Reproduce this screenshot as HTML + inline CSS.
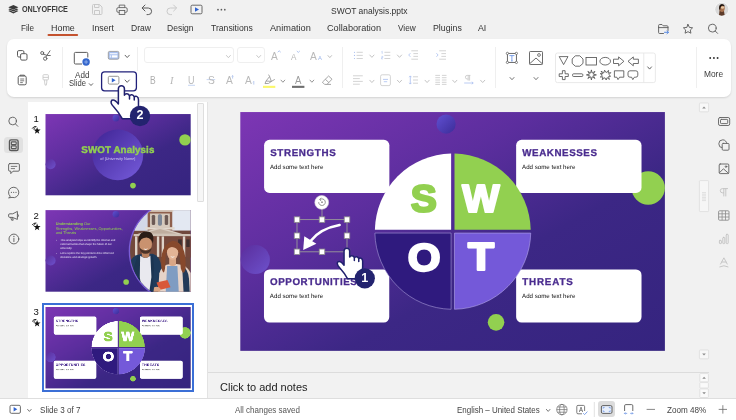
<!DOCTYPE html>
<html lang="en"><head><meta charset="utf-8"><title>SWOT analysis.pptx</title>
<style>

html,body{margin:0;padding:0}
body{width:736px;height:420px;overflow:hidden;position:relative;background:#f1f1f1;font-family:"Liberation Sans",sans-serif;}
#root{position:absolute;left:0;top:0;width:736px;height:420px;will-change:transform}
.t{position:absolute;white-space:nowrap;line-height:1;font-family:"Liberation Sans",sans-serif;}
.sl{position:absolute;display:block}
.ab{position:absolute}
svg{overflow:visible}
.sl{overflow:hidden}
.bt{font:bold 9.8px "Liberation Sans",sans-serif;text-rendering:geometricPrecision;fill:#4a2c8f;stroke:#4a2c8f;stroke-width:0.3px}
.bs{font:6.15px "Liberation Sans",sans-serif;text-rendering:geometricPrecision;fill:#111}
.big{font:bold 38px "Liberation Sans",sans-serif;text-anchor:middle;stroke-width:2.2px;stroke-linejoin:round}
#tb{position:absolute;left:7px;top:38.5px;width:724px;height:58px;background:#fff;border-radius:7px;box-shadow:0 1px 2px rgba(0,0,0,0.13)}
#thumbs{position:absolute;left:27.5px;top:102px;width:180px;height:296px;background:#fff;border-right:1px solid #e3e3e3;box-sizing:border-box}
#tsb{position:absolute;left:197.3px;top:103.2px;width:6.4px;height:99.3px;background:#f6f6f6;border:1px solid #dedede;box-sizing:border-box;border-radius:1px}
#sel{position:absolute;left:41.9px;top:302.9px;width:152.3px;height:88.7px;border:2.2px solid #3b6fd6;box-sizing:border-box;background:#fff}
.sep{position:absolute;width:1px;background:#efefef;top:47px;height:41px}
.combo{position:absolute;border:1px solid #efefef;border-radius:3px;box-sizing:border-box;background:transparent}

</style></head>
<body>
<div id="root">
<svg width="0" height="0" style="position:absolute">
<defs>
<linearGradient id="gBg" x1="0" y1="0" x2="1" y2="1">
<stop offset="0" stop-color="#7d36b4"/><stop offset="0.35" stop-color="#5c2e9e"/><stop offset="0.62" stop-color="#3c2785"/><stop offset="1" stop-color="#35247f"/>
</linearGradient>
<linearGradient id="gTop" x1="0" y1="0" x2="1" y2="1">
<stop offset="0" stop-color="#6050d2"/><stop offset="1" stop-color="#3c2c98"/>
</linearGradient>
<linearGradient id="gLeft" x1="0" y1="0" x2="1" y2="1">
<stop offset="0" stop-color="#5a2d9c"/><stop offset="1" stop-color="#6d52cc"/>
</linearGradient>
<linearGradient id="gBig" x1="0" y1="0" x2="1" y2="1">
<stop offset="0.1" stop-color="#44289a"/><stop offset="0.95" stop-color="#7359d8"/>
</linearGradient>
</defs></svg>
<svg class="ab" style="left:0;top:0" width="736" height="100" viewBox="0 0 736 100" fill="none">
<g fill="#3a3a3a">
<path d="M13.35 4.9 L18.4 7.3 L13.35 9.7 L8.3 7.3 Z"/>
<path d="M8.3 9.2 L9.9 8.45 L13.35 10.1 L16.8 8.45 L18.4 9.2 L13.35 11.6 Z"/>
<path d="M8.3 11.1 L9.9 10.35 L13.35 12 L16.8 10.35 L18.4 11.1 L13.35 13.5 Z"/>
</g>
<g stroke="#c9c9c9" stroke-width="1"><path d="M92.5 5.5 a1 1 0 0 1 1 -1 h6 l2.5 2.5 v6.5 a1 1 0 0 1 -1 1 h-7.5 a1 1 0 0 1 -1 -1 z"/><path d="M94.5 4.5 v3 h4.5 v-3"/><path d="M94.5 14.5 v-4 h5 v4"/></g>
<g stroke="#5a5a5a" stroke-width="0.85"><path d="M119.2 7.6 v-2.5 h5.6 v2.5"/><rect x="116.8" y="7.6" width="10.4" height="4.8" rx="1.5"/><rect x="119.2" y="10.4" width="5.6" height="4" fill="#f1f1f1"/></g>
<g stroke="#5a5a5a" stroke-width="1" stroke-linecap="round" stroke-linejoin="round"><path d="M145 5 L142 8 L145 11"/><path d="M142.3 8 H148.3 a3.3 3.3 0 0 1 0 6.6 H147"/></g>
<g stroke="#c9c9c9" stroke-width="1" stroke-linecap="round" stroke-linejoin="round"><path d="M173.6 5 L176.6 8 L173.6 11"/><path d="M176.3 8 H170.3 a3.3 3.3 0 0 0 0 6.6 H171.6"/></g>
<rect x="191" y="5.2" width="11" height="8.6" rx="1.2" stroke="#5a5a5a" stroke-width="0.9"/><path d="M195 7.2 L199 9.5 L195 11.8 Z" fill="#2f62cf"/>
<g fill="#5a5a5a"><circle cx="218" cy="9.7" r="0.85"/><circle cx="221.4" cy="9.7" r="0.85"/><circle cx="224.8" cy="9.7" r="0.85"/></g>
<clipPath id="av"><circle cx="721.8" cy="9.3" r="6.6"/></clipPath>
<circle cx="721.8" cy="9.3" r="7.2" fill="#f8f8f8"/>
<g clip-path="url(#av)"><rect x="714" y="2" width="16" height="16" fill="#d9d9d9"/>
<path d="M719.6 10 L719 15 Q721.5 16.4 724.6 15 L724 11 Z" fill="#5e3b29"/>
<ellipse cx="722" cy="8.3" rx="2.7" ry="3.6" fill="#a87350"/>
<ellipse cx="722.5" cy="7.5" rx="1.5" ry="1.3" fill="#eccba6"/>
<path d="M719.2 9.6 Q718.4 4.2 722 4.1 Q724.6 4.2 724.8 6.4 Q723 5.2 721.4 6 Q720.2 7 720.2 9.8 Z" fill="#20150f"/>
</g>
<rect x="47.5" y="34" width="30.6" height="2" rx="1" fill="#c4522e"/>
<g stroke="#5a5a5a" stroke-width="0.9" stroke-linejoin="round" stroke-linecap="round">
<path d="M663.5 33.5 H659.6 a1 1 0 0 1 -1 -1 V25.5 a1 1 0 0 1 1 -1 H662 l1.2 1.3 H667 a1 1 0 0 1 1 1 V30.5"/>
<path d="M658.6 27.6 H668"/>
<path d="M688 24.4 L689.4 27.4 L692.6 27.8 L690.3 30 L690.9 33.2 L688 31.7 L685.1 33.2 L685.7 30 L683.4 27.8 L686.6 27.4 Z"/>
<circle cx="712.3" cy="28.1" r="3.9"/><path d="M715.2 31 L717.6 33.4"/>
</g>
<path d="M664.5 32.3 H668.3 M667 30.9 L668.5 32.3 L667 33.7" stroke="#4a7fe0" stroke-width="0.9" stroke-linecap="round" stroke-linejoin="round"/>
</svg>
<span class="t" style="left:21.60px;top:5.02px;font-size:8.9px;transform:scaleX(0.8145);transform-origin:0 0;color:#3a3a3a;font-weight:bold;">ONLYOFFICE</span>
<span class="t" style="left:330.50px;top:5.54px;font-size:9.4px;transform:scaleX(0.9035);transform-origin:0 0;color:#333;">SWOT analysis.pptx</span>
<span class="t" style="left:20.80px;top:22.86px;font-size:9.5px;transform:scaleX(0.8558);transform-origin:0 0;color:#333;">File</span>
<span class="t" style="left:51.20px;top:22.86px;font-size:9.5px;transform:scaleX(0.9392);transform-origin:0 0;color:#333;">Home</span>
<span class="t" style="left:91.50px;top:22.86px;font-size:9.5px;transform:scaleX(0.9217);transform-origin:0 0;color:#333;">Insert</span>
<span class="t" style="left:131.20px;top:22.86px;font-size:9.5px;transform:scaleX(0.9022);transform-origin:0 0;color:#333;">Draw</span>
<span class="t" style="left:167.40px;top:22.86px;font-size:9.5px;transform:scaleX(0.8995);transform-origin:0 0;color:#333;">Design</span>
<span class="t" style="left:211.40px;top:22.86px;font-size:9.5px;transform:scaleX(0.9066);transform-origin:0 0;color:#333;">Transitions</span>
<span class="t" style="left:270.20px;top:22.86px;font-size:9.5px;transform:scaleX(0.9658);transform-origin:0 0;color:#333;">Animation</span>
<span class="t" style="left:327.40px;top:22.86px;font-size:9.5px;transform:scaleX(0.9646);transform-origin:0 0;color:#333;">Collaboration</span>
<span class="t" style="left:398.20px;top:22.86px;font-size:9.5px;transform:scaleX(0.8717);transform-origin:0 0;color:#333;">View</span>
<span class="t" style="left:433.20px;top:22.86px;font-size:9.5px;transform:scaleX(0.9243);transform-origin:0 0;color:#333;">Plugins</span>
<span class="t" style="left:478.30px;top:22.86px;font-size:9.5px;transform:scaleX(0.9247);transform-origin:0 0;color:#333;">AI</span>
<div id="tb"></div>
<svg class="ab" style="left:0;top:0" width="736" height="100" viewBox="0 0 736 100" fill="none">
<g stroke="#5a5a5a" stroke-width="1"><rect x="17.5" y="50.6" width="6.4" height="6.4" rx="1.3"/><rect x="20.6" y="53.7" width="6.4" height="6.4" rx="1.3" fill="#fff"/></g>
<g stroke="#5a5a5a" stroke-width="0.9" stroke-linecap="round"><circle cx="45.2" cy="58.6" r="1.7"/><circle cx="42.2" cy="53" r="1.5"/><path d="M45.9 57 L50 50.8"/><path d="M43.2 54.2 L47.5 55.5 H50.3"/></g>
<g stroke="#5a5a5a" stroke-width="1"><rect x="18.2" y="76" width="8" height="8.8" rx="1.4"/><path d="M20 76 v-0.8 h4.4 v0.8" /><path d="M20.2 79 h4 M20.2 80.8 h4 M20.2 82.6 h2.6" stroke-width="0.8"/></g>
<g stroke="#c9c9c9" stroke-width="0.9"><rect x="43" y="74.7" width="5.4" height="5.2" rx="0.8"/><path d="M43 77.4 h5.4"/><path d="M44.6 79.9 v2.2 l0.5 3 h1.2 l0.5 -3 v-2.2"/></g>
<path d="M82 64 H75.5 a1.2 1.2 0 0 1 -1.2 -1.2 V53.6 a1.2 1.2 0 0 1 1.2 -1.2 H86.6 a1.2 1.2 0 0 1 1.2 1.2 V57.5" stroke="#5a5a5a" stroke-width="1"/><circle cx="86.1" cy="62" r="3.7" fill="#3567cd"/><path d="M84.2 62 h3.8 M86.1 60.1 v3.8" stroke="#9db9ee" stroke-width="0.8"/>
<path d="M89.3 83.69999999999999 L91 85.5 L92.7 83.69999999999999" fill="none" stroke="#555" stroke-width="0.9" stroke-linecap="round" stroke-linejoin="round"/>
<rect x="108.3" y="51.4" width="10.6" height="7.8" rx="1.3" fill="#a9c1ef" stroke="#9a9a9a" stroke-width="0.9"/><rect x="109.8" y="53" width="7.6" height="1.3" fill="#eaf0fc"/><rect x="109.8" y="55.3" width="1.3" height="2.2" fill="#eaf0fc"/><rect x="111.9" y="55.3" width="5.5" height="2.2" fill="#fff"/>
<path d="M125.10000000000001 55.25 L127.2 57.55 L129.3 55.25" fill="none" stroke="#555" stroke-width="0.9" stroke-linecap="round" stroke-linejoin="round"/>
<rect x="101.6" y="71.8" width="34.8" height="19" rx="3" fill="#fff" stroke="#20207a" stroke-width="1.3"/>
<rect x="108.3" y="76.3" width="10.6" height="7.8" rx="1.3" stroke="#8a8a8a" stroke-width="0.9"/><path d="M111.8 78 L115.6 80.2 L111.8 82.4 Z" fill="#2f62cf"/>
<path d="M125.10000000000001 80.05 L127.2 82.35000000000001 L129.3 80.05" fill="none" stroke="#555" stroke-width="0.9" stroke-linecap="round" stroke-linejoin="round"/>
<path d="M226.45000000000002 55.5 L228.4 57.7 L230.35 55.5" fill="none" stroke="#c2c2c2" stroke-width="0.9" stroke-linecap="round" stroke-linejoin="round"/>
<path d="M256.75 55.5 L258.7 57.7 L260.65 55.5" fill="none" stroke="#c2c2c2" stroke-width="0.9" stroke-linecap="round" stroke-linejoin="round"/>
<path d="M277.7 52.2 L279.2 50.8 L280.7 52.2" stroke="#9db6ea" stroke-width="0.8"/>
<path d="M296.8 51 L298.3 52.4 L299.8 51" stroke="#9db6ea" stroke-width="0.8"/>
<path d="M328.0 55.6 L329.8 57.6 L331.6 55.6" fill="none" stroke="#b5b5b5" stroke-width="0.9" stroke-linecap="round" stroke-linejoin="round"/>
<path d="M188 85.3 h7" stroke="#b9cbf0" stroke-width="0.8"/>
<path d="M206.6 79.6 h8.6" stroke="#b9cbf0" stroke-width="0.8"/>
<path d="M232.6 75.6 v3 M231.8 76.4 L232.6 75.6 L233.4 76.4" stroke="#9db6ea" stroke-width="0.7"/>
<path d="M253.8 81.4 v3.2 M253 82.2 L253.8 81.4" stroke="#9db6ea" stroke-width="0.7"/>
<g stroke="#8f8f8f" stroke-width="0.8" stroke-linejoin="round"><path d="M268.6 74.6 L269.6 76.6 L266 81 L265 83.6 L268.6 83.4 L271.4 81.4 L274.8 79.4"/><path d="M266 81 L271.4 81.4 L269.6 76.6"/></g>
<rect x="263" y="85.8" width="12.3" height="2.1" fill="#fbf86a"/>
<path d="M281.0 80.15 L282.9 82.25 L284.79999999999995 80.15" fill="none" stroke="#8a8a8a" stroke-width="0.9" stroke-linecap="round" stroke-linejoin="round"/>
<rect x="292" y="85.8" width="12.4" height="2.1" fill="#6f6f6f"/>
<path d="M310.0 80.15 L311.9 82.25 L313.79999999999995 80.15" fill="none" stroke="#8a8a8a" stroke-width="0.9" stroke-linecap="round" stroke-linejoin="round"/>
<g stroke="#8f8f8f" stroke-width="0.8" stroke-linejoin="round"><path d="M328.6 76 L332 79.2 L327 84.4 H324.6 L322.4 82.2 Z"/><path d="M325.4 79.3 L328.8 82.5"/><path d="M327 84.4 H331"/></g>
<circle cx="354.5" cy="52.3" r="0.6" fill="#a9bff0"/><path d="M356.6 52.3 H362.8" stroke="#cfcfcf" stroke-width="0.9"/>
<circle cx="354.5" cy="55.4" r="0.6" fill="#a9bff0"/><path d="M356.6 55.4 H362.8" stroke="#cfcfcf" stroke-width="0.9"/>
<circle cx="354.5" cy="58.5" r="0.6" fill="#a9bff0"/><path d="M356.6 58.5 H362.8" stroke="#cfcfcf" stroke-width="0.9"/>
<path d="M369.79999999999995 55.050000000000004 L371.9 57.35 L374.0 55.050000000000004" fill="none" stroke="#bdbdbd" stroke-width="0.9" stroke-linecap="round" stroke-linejoin="round"/>
<path d="M384.4 52.3 H390.3" stroke="#cfcfcf" stroke-width="0.9"/>
<path d="M384.4 55.4 H390.3" stroke="#cfcfcf" stroke-width="0.9"/>
<path d="M384.4 58.5 H390.3" stroke="#cfcfcf" stroke-width="0.9"/>
<path d="M381.6 51.6 l0.6 -0.4 v2.6 M381.5 56.4 h1.3 v1.2 h-1.3 v1.3 h1.4" stroke="#a9bff0" stroke-width="0.6"/>
<path d="M397.4 55.050000000000004 L399.5 57.35 L401.6 55.050000000000004" fill="none" stroke="#bdbdbd" stroke-width="0.9" stroke-linecap="round" stroke-linejoin="round"/>
<path d="M411.3 50.8 H418 M413.4 53.6 H418 M413.4 56.4 H418 M411.3 59.2 H418" stroke="#cfcfcf" stroke-width="0.9"/><path d="M410.4 53.2 L408.7 55 L410.4 56.8" stroke="#a9bff0" stroke-width="0.8"/>
<path d="M439.2 50.8 H446 M441.4 53.6 H446 M441.4 56.4 H446 M439.2 59.2 H446" stroke="#cfcfcf" stroke-width="0.9"/><path d="M436.4 53.2 L438.1 55 L436.4 56.8" stroke="#a9bff0" stroke-width="0.8"/>
<path d="M353 75.8 H362.8 M353 78.6 H359.8 M353 81.4 H362.8 M353 84.2 H359.8" stroke="#cfcfcf" stroke-width="0.9"/>
<path d="M369.79999999999995 80.25 L371.9 82.55000000000001 L374.0 80.25" fill="none" stroke="#bdbdbd" stroke-width="0.9" stroke-linecap="round" stroke-linejoin="round"/>
<rect x="380.6" y="74.8" width="9.8" height="10.8" rx="1.5" stroke="#cfcfcf" stroke-width="0.9"/><path d="M383 79.4 H388 M383.8 81.7 H387.2" stroke="#a9bff0" stroke-width="0.8"/>
<path d="M397.4 80.25 L399.5 82.55000000000001 L401.6 80.25" fill="none" stroke="#bdbdbd" stroke-width="0.9" stroke-linecap="round" stroke-linejoin="round"/>
<path d="M413 76.8 H418 M413 80 H418 M413 83.2 H418" stroke="#cfcfcf" stroke-width="0.9"/><path d="M410.3 76 V84 M409.2 77.2 L410.3 75.9 L411.4 77.2 M409.2 82.8 L410.3 84.1 L411.4 82.8" stroke="#a9bff0" stroke-width="0.8"/>
<path d="M425.0 80.25 L427.1 82.55000000000001 L429.20000000000005 80.25" fill="none" stroke="#bdbdbd" stroke-width="0.9" stroke-linecap="round" stroke-linejoin="round"/>
<path d="M435.3 75.4 H440 M435.3 77.7 H440 M435.3 80 H440 M435.3 82.3 H440 M435.3 84.4 H440 M441.9 75.4 H446.5 M441.9 77.7 H446.5 M441.9 80 H446.5 M441.9 82.3 H446.5 M441.9 84.4 H446.5" stroke="#cfcfcf" stroke-width="0.9"/>
<path d="M452.7 80.25 L454.8 82.55000000000001 L456.90000000000003 80.25" fill="none" stroke="#bdbdbd" stroke-width="0.9" stroke-linecap="round" stroke-linejoin="round"/>
<path d="M470.4 75.4 H467.2 a1.8 1.8 0 0 0 0 3.6 H468.2 M468.2 75.4 V80.6 M469.6 75.4 V80.6" stroke="#c4c4c4" stroke-width="0.8"/><path d="M464.2 83 H473.2 M471.8 81.8 L473.2 83 L471.8 84.2" stroke="#a9bff0" stroke-width="0.8"/>
<path d="M480.59999999999997 80.25 L482.7 82.55000000000001 L484.8 80.25" fill="none" stroke="#bdbdbd" stroke-width="0.9" stroke-linecap="round" stroke-linejoin="round"/>
<rect x="507.4" y="53.4" width="9" height="9" stroke="#5a5a5a" stroke-width="0.9"/>
<circle cx="507.4" cy="53.4" r="1.15" fill="#fff" stroke="#5a5a5a" stroke-width="0.7"/>
<circle cx="516.4" cy="53.4" r="1.15" fill="#fff" stroke="#5a5a5a" stroke-width="0.7"/>
<circle cx="507.4" cy="62.4" r="1.15" fill="#fff" stroke="#5a5a5a" stroke-width="0.7"/>
<circle cx="516.4" cy="62.4" r="1.15" fill="#fff" stroke="#5a5a5a" stroke-width="0.7"/>
<path d="M509.4 55.6 H514.4 M511.9 55.6 V61 M511.2 61 h1.4" stroke="#6f97e6" stroke-width="0.9"/>
<path d="M510.0 77.5 L512 79.69999999999999 L514.0 77.5" fill="none" stroke="#666" stroke-width="0.9" stroke-linecap="round" stroke-linejoin="round"/>
<rect x="529.5" y="51.5" width="13" height="13" rx="0.8" stroke="#5a5a5a" stroke-width="0.9"/><circle cx="539" cy="55" r="1.4" stroke="#5a5a5a" stroke-width="0.8"/><path d="M529.8 63.6 L536 58 L542.3 63.8" stroke="#5a5a5a" stroke-width="0.9"/>
<path d="M534.0 77.5 L536 79.69999999999999 L538.0 77.5" fill="none" stroke="#666" stroke-width="0.9" stroke-linecap="round" stroke-linejoin="round"/>
<rect x="555.5" y="53" width="99.9" height="29.6" rx="2" stroke="#e6e6e6" stroke-width="0.9" fill="#fff"/><path d="M643.8 53 V82.6" stroke="#e6e6e6" stroke-width="0.9"/>
<path d="M559.2 56.6 H568 L563.6 64.6 Z" stroke="#4a4a4a" stroke-width="0.8" stroke-linejoin="miter" fill="none"/>
<path d="M575.3 55.8 H579.8 L583 59 V63.4 L579.8 66.2 H575.3 L572.2 63.4 V59 Z" stroke="#4a4a4a" stroke-width="0.8" stroke-linejoin="miter" fill="none"/>
<rect x="586" y="57.4" width="10.4" height="7.6" stroke="#4a4a4a" stroke-width="0.8" stroke-linejoin="miter" fill="none"/>
<ellipse cx="605.2" cy="61.2" rx="5.3" ry="3.8" stroke="#4a4a4a" stroke-width="0.8" stroke-linejoin="miter" fill="none"/>
<path d="M613.5 59.2 H618.6 V56.9 L623.9 61.3 L618.6 65.8 V63.5 H613.5 Z" stroke="#4a4a4a" stroke-width="0.8" stroke-linejoin="miter" fill="none"/>
<path d="M638.4 59.2 H633.3 V56.9 L628 61.3 L633.3 65.8 V63.5 H638.4 Z" stroke="#4a4a4a" stroke-width="0.8" stroke-linejoin="miter" fill="none"/>
<path d="M562.4 70.7 H565.1 V73.8 H568.3 V76.5 H565.1 V79.6 H562.4 V76.5 H559.2 V73.8 H562.4 Z" stroke="#4a4a4a" stroke-width="0.8" stroke-linejoin="miter" fill="none"/>
<rect x="572.6" y="73.8" width="10.2" height="2.7" rx="0.9" stroke="#4a4a4a" stroke-width="0.8" stroke-linejoin="miter" fill="none"/>
<path d="M591.40 69.90 L592.17 73.05 L594.94 71.36 L593.25 74.13 L596.40 74.90 L593.25 75.67 L594.94 78.44 L592.17 76.75 L591.40 79.90 L590.63 76.75 L587.86 78.44 L589.55 75.67 L586.40 74.90 L589.55 74.13 L587.86 71.36 L590.63 73.05 Z" stroke="#4a4a4a" stroke-width="0.8" stroke-linejoin="miter" fill="none"/>
<path d="M601 71.2 L603.8 72.9 L604.6 70.2 L606.1 72.6 L608.6 70.4 L608.1 73.2 L610.8 72.6 L608.9 74.7 L610.6 76.2 L608.5 76.6 L609.4 79.4 L607 77.6 L606.2 80 L604.9 77.7 L602.2 79.6 L603 76.9 L600.3 77 L602.3 75.2 L600.2 73.6 L602.8 73.6 Z" stroke="#4a4a4a" stroke-width="0.8" stroke-linejoin="miter" fill="none"/>
<path d="M614.4 70.8 H623.8 V77.2 H619.6 L618 79.6 L616.8 77.2 H614.4 Z" stroke="#4a4a4a" stroke-width="0.8" stroke-linejoin="miter" fill="none"/>
<path d="M630 70.8 H635.8 Q637.8 70.8 637.8 72.8 V75.2 Q637.8 77.2 635.8 77.2 H634.4 L632.8 79.6 L631.6 77.2 H630 Q628 77.2 628 75.2 V72.8 Q628 70.8 630 70.8 Z" stroke="#4a4a4a" stroke-width="0.8" stroke-linejoin="miter" fill="none"/>
<path d="M647.7 66.9 L649.6 69.1 L651.5 66.9" fill="none" stroke="#555" stroke-width="0.9" stroke-linecap="round" stroke-linejoin="round"/>
<g fill="#333"><circle cx="710.2" cy="58" r="0.95"/><circle cx="713.9" cy="58" r="0.95"/><circle cx="717.6" cy="58" r="0.95"/></g>
</svg>
<div class="sep" style="left:61.5px"></div>
<div class="sep" style="left:342.3px"></div>
<div class="sep" style="left:495.2px"></div>
<div class="sep" style="left:696.3px"></div>
<div class="sep" style="left:137.2px;height:24px"></div>
<div class="combo" style="left:143.8px;top:47.2px;width:90.2px;height:16.2px"></div>
<div class="combo" style="left:237.2px;top:47.2px;width:27.4px;height:16.2px"></div>
<span class="t" style="left:74.90px;top:71.20px;font-size:8.5px;transform:scaleX(0.9521);transform-origin:0 0;color:#3c3c3c;">Add</span>
<span class="t" style="left:69.30px;top:79.20px;font-size:8.5px;transform:scaleX(0.8941);transform-origin:0 0;color:#3c3c3c;">Slide</span>
<span class="t" style="left:704.30px;top:69.99px;font-size:8.4px;transform:scaleX(0.9991);transform-origin:0 0;color:#3c3c3c;">More</span>
<span class="t" style="left:149.90px;top:75.90px;font-size:10.4px;transform:scaleX(0.8225);transform-origin:0 0;color:#adadad;">B</span>
<span class="t" style="left:170.00px;top:75.90px;font-size:10.4px;letter-spacing:1.713px;color:#b9b9b9;font-family:'Liberation Serif',serif;font-style:italic;">I</span>
<span class="t" style="left:188.20px;top:75.90px;font-size:10.4px;transform:scaleX(0.8662);transform-origin:0 0;color:#b9b9b9;">U</span>
<span class="t" style="left:207.60px;top:75.90px;font-size:10.4px;transform:scaleX(0.9812);transform-origin:0 0;color:#b9b9b9;">S</span>
<span class="t" style="left:226.20px;top:75.90px;font-size:10.4px;transform:scaleX(0.9812);transform-origin:0 0;color:#b9b9b9;">A</span>
<span class="t" style="left:245.40px;top:75.90px;font-size:10.4px;transform:scaleX(0.9812);transform-origin:0 0;color:#b9b9b9;">A</span>
<span class="t" style="left:271.40px;top:50.93px;font-size:10.6px;transform:scaleX(0.9624);transform-origin:0 0;color:#b9b9b9;">A</span>
<span class="t" style="left:291.40px;top:52.52px;font-size:8.6px;transform:scaleX(0.9421);transform-origin:0 0;color:#b9b9b9;">A</span>
<span class="t" style="left:310.20px;top:50.93px;font-size:10.6px;transform:scaleX(0.9624);transform-origin:0 0;color:#b9b9b9;">A</span>
<span class="t" style="left:317.60px;top:54.75px;font-size:6.2px;transform:scaleX(0.9450);transform-origin:0 0;color:#9db6ea;">A</span>
<span class="t" style="left:295.20px;top:76.07px;font-size:10.2px;transform:scaleX(0.9419);transform-origin:0 0;color:#9c9c9c;">A</span>
<div class="ab" style="left:4.4px;top:136.8px;width:18.6px;height:16.2px;border-radius:3.5px;background:#e1e1e1"></div>
<svg class="ab" style="left:0;top:100px" width="30" height="160" viewBox="0 100 30 160" fill="none">
<circle cx="12.6" cy="121" r="3.8" stroke="#5a5a5a" stroke-width="0.9" stroke-linecap="round" stroke-linejoin="round"/><path d="M15.4 123.9 L17.8 126.3" stroke="#5a5a5a" stroke-width="0.9" stroke-linecap="round" stroke-linejoin="round"/>
<rect x="9.5" y="139.9" width="8.6" height="10.6" rx="1.6" stroke="#585858" stroke-width="1.4"/><rect x="11.4" y="141.9" width="4.8" height="2.7" rx="0.5" stroke="#585858" stroke-width="1.1"/><rect x="11.4" y="145.9" width="4.8" height="2.7" rx="0.5" stroke="#585858" stroke-width="1.1"/>
<path d="M9.8 163.6 H18.2 a1.2 1.2 0 0 1 1.2 1.2 V170 a1.2 1.2 0 0 1 -1.2 1.2 H13 L10.8 173.6 V171.2 H9.8 a1.2 1.2 0 0 1 -1.2 -1.2 V164.8 a1.2 1.2 0 0 1 1.2 -1.2 Z" stroke="#5a5a5a" stroke-width="0.9" stroke-linecap="round" stroke-linejoin="round"/><path d="M10.8 166.4 H17.2 M10.8 168.6 H15" stroke="#5a5a5a" stroke-width="0.8"/>
<path d="M10 196.2 a5.2 5.2 0 1 1 2 1.2 L9 197.8 Z" stroke="#5a5a5a" stroke-width="0.9" stroke-linecap="round" stroke-linejoin="round"/><g fill="#5a5a5a"><circle cx="11.4" cy="192.3" r="0.6"/><circle cx="13.7" cy="192.3" r="0.6"/><circle cx="16" cy="192.3" r="0.6"/></g>
<path d="M17.4 211.8 V219.4 L12.4 217.4 H9.8 a1.2 1.2 0 0 1 -1.2 -1.2 V215 a1.2 1.2 0 0 1 1.2 -1.2 H12.4 Z M17.4 214 a1.7 1.7 0 0 1 0 3.2 M10.8 217.6 L11.6 220.2 H13.2 L12.6 217.6" stroke="#5a5a5a" stroke-width="0.9" stroke-linecap="round" stroke-linejoin="round"/>
<circle cx="13.9" cy="239" r="4.9" stroke="#5a5a5a" stroke-width="0.9" stroke-linecap="round" stroke-linejoin="round"/><path d="M13.9 238.2 V241.6" stroke="#5a5a5a" stroke-width="0.9" stroke-linecap="round" stroke-linejoin="round"/><circle cx="13.9" cy="236.4" r="0.6" fill="#5a5a5a"/>
</svg>
<div id="thumbs"></div>
<div id="tsb"></div>
<svg class="ab" style="left:0;top:100px" width="60" height="300" viewBox="0 100 60 300" fill="none">
<path d="M37.10 127.00 L37.97 129.50 L40.62 129.56 L38.51 131.16 L39.27 133.69 L37.10 132.18 L34.93 133.69 L35.69 131.16 L33.58 129.56 L36.23 129.50 Z" fill="#111"/><path d="M32.4 128.2 Q33.4 126.3 36 126.5" stroke="#111" stroke-width="1" stroke-linecap="round" fill="none"/><path d="M33.6 128.9 L35 127.9" stroke="#111" stroke-width="0.8" stroke-linecap="round"/>
<path d="M37.10 223.50 L37.97 226.00 L40.62 226.06 L38.51 227.66 L39.27 230.19 L37.10 228.68 L34.93 230.19 L35.69 227.66 L33.58 226.06 L36.23 226.00 Z" fill="#111"/><path d="M32.4 224.7 Q33.4 222.8 36 223.0" stroke="#111" stroke-width="1" stroke-linecap="round" fill="none"/><path d="M33.6 225.4 L35 224.4" stroke="#111" stroke-width="0.8" stroke-linecap="round"/>
<path d="M37.10 319.90 L37.97 322.40 L40.62 322.46 L38.51 324.06 L39.27 326.59 L37.10 325.08 L34.93 326.59 L35.69 324.06 L33.58 322.46 L36.23 322.40 Z" fill="#111"/><path d="M32.4 321.09999999999997 Q33.4 319.2 36 319.4" stroke="#111" stroke-width="1" stroke-linecap="round" fill="none"/><path d="M33.6 321.79999999999995 L35 320.79999999999995" stroke="#111" stroke-width="0.8" stroke-linecap="round"/>
</svg>
<span class="t" style="left:33.50px;top:114.27px;font-size:9.6px;letter-spacing:0.064px;color:#111;">1</span>
<span class="t" style="left:33.50px;top:210.77px;font-size:9.6px;letter-spacing:0.064px;color:#111;">2</span>
<span class="t" style="left:33.50px;top:307.17px;font-size:9.6px;letter-spacing:0.064px;color:#111;">3</span>
<svg class="sl" style="left:45px;top:114px" width="146" height="82" viewBox="-1.4635 -0.1471 427.3416 241.2062" preserveAspectRatio="none" ><svg x="0" y="0" width="425" height="239" viewBox="0 0 425 239" overflow="hidden">
<rect width="425" height="239" fill="url(#gBg)"/>
<circle cx="211.5" cy="120" r="74.5" fill="url(#gBig)"/>

<circle cx="206" cy="12" r="9.6" fill="url(#gTop)"/>
<circle cx="408.3" cy="76" r="16.7" fill="#92d050"/>
<circle cx="15" cy="147.6" r="14.6" fill="url(#gLeft)"/>
<circle cx="256" cy="210.5" r="8.3" fill="#92d050"/>
<text x="211.8" y="113.6" text-anchor="middle" style="font:bold 28.6px 'Liberation Sans',sans-serif;letter-spacing:0.3px;text-rendering:geometricPrecision" fill="#92d050" stroke="#92d050" stroke-width="1.2">SWOT Analysis</text>
<text x="211.8" y="135.2" text-anchor="middle" style="font:11.4px 'Liberation Sans',sans-serif;text-rendering:geometricPrecision" fill="#d6cef4">of [University Name]</text>
</svg></svg>
<svg class="sl" style="left:45px;top:210px" width="146" height="82" viewBox="-1.4635 -0.2929 427.3416 240.1716" preserveAspectRatio="none" ><svg x="0" y="0" width="425" height="239" viewBox="0 0 425 239" overflow="hidden">
<rect width="425" height="239" fill="url(#gBg)"/>

<circle cx="206" cy="12" r="9.6" fill="url(#gTop)"/>
<circle cx="408.3" cy="76" r="16.7" fill="#92d050"/>
<circle cx="15" cy="147.6" r="14.6" fill="url(#gLeft)"/>
<circle cx="236" cy="210.5" r="8.3" fill="#92d050"/>
<clipPath id="cPh"><circle cx="392" cy="120" r="144.5"/></clipPath>
<circle cx="392" cy="120" r="148.5" fill="#7b5ed8"/>
<g clip-path="url(#cPh)">
<rect x="240" y="0" width="185" height="239" fill="#70493c"/>
<rect x="240" y="0" width="185" height="60" fill="#e3e8f2"/>
<path d="M240 0 H300 V60 H240 Z" fill="#d3d8e8"/>
<rect x="299" y="0" width="72" height="60" fill="#8f604d"/>
<rect x="296" y="0" width="78" height="5" fill="#d9cec2"/>
<rect x="306" y="10" width="58" height="40" fill="#d6cabd"/>
<rect x="311" y="14" width="10" height="30" rx="4" fill="#6c5a55"/><rect x="329" y="12" width="12" height="34" rx="5" fill="#7d8796"/><rect x="349" y="14" width="10" height="30" rx="4" fill="#6c5a55"/>
<rect x="292" y="50" width="86" height="7" fill="#e3dacf"/>
<path d="M262 72 L335 50 L408 72 Z" fill="#d8cdc1"/>
<path d="M284 69 L335 55 L386 69 Z" fill="#bfae9f"/>
<rect x="258" y="70" width="167" height="7" fill="#cfc3b6"/>
<rect x="258" y="77" width="167" height="62" fill="#75483b"/>
<g fill="#ddd3c8"><rect x="262" y="77" width="7" height="60"/><rect x="326" y="77" width="7" height="60"/><rect x="340" y="77" width="7" height="60"/><rect x="402" y="77" width="7" height="60"/></g>
<g fill="#3d2f2e"><rect x="276" y="84" width="12" height="22"/><rect x="388" y="86" width="11" height="22"/><rect x="412" y="86" width="10" height="22"/></g>
<path d="M244 239 L246 158 Q250 134 276 129 L314 128 Q336 134 340 172 L346 239 Z" fill="#1f3b5b"/>
<path d="M270 132 Q292 146 314 131 L318 170 L312 239 L262 239 L258 170 Z" fill="#1c3552"/>
<path d="M277 134 Q292 146 307 134 L310 196 L304 239 L282 239 L276 196 Z" fill="#e9e9ef"/>
<path d="M282 118 H304 V136 Q293 144 282 136 Z" fill="#b98260"/>
<ellipse cx="293" cy="101" rx="18.5" ry="23" fill="#c9926f"/>
<path d="M275 108 Q277 128 293 128 Q309 128 311 108 Q306 118 293 118 Q280 118 275 108Z" fill="#4a3328"/>
<path d="M287 112 Q293 116 300 112 Q297 117 293 117 Q289 117 287 112Z" fill="#f3efec"/>
<path d="M273 98 Q268 64 296 63 Q322 64 314 98 Q312 82 296 80 Q278 80 273 98Z" fill="#2b1d17"/>
<path d="M330 239 L333 186 Q340 160 366 158 L384 158 Q414 160 425 184 L425 239 Z" fill="#e6d3c8"/>
<path d="M400 164 Q416 170 420 200 L422 239 L404 239 Z" fill="#233a58"/>
<path d="M356 164 L386 164 L390 239 L352 239 Z" fill="#7f9cc2"/>
<path d="M340 172 Q332 104 372 90 Q414 94 410 172 Q404 196 396 170 L392 124 L352 124 L350 170 Q346 194 340 172Z" fill="#87492c"/>
<path d="M362 140 H382 V160 Q372 168 362 160Z" fill="#d9a686"/>
<ellipse cx="372" cy="124" rx="16.5" ry="21.5" fill="#e2b395"/>
<path d="M365 134 Q372 139 379 134 Q376 139.5 372 139.5 Q368 139.500 365 134Z" fill="#f6f1ee"/>
<path d="M353 122 Q354 96 376 96 Q396 98 392 126 Q384 108 370 108 Q358 110 353 122Z" fill="#87492c"/>
<path d="M325 212 L357 205 L366 226 L333 234 Z" fill="#d9583a"/>
<path d="M318 226 Q330 222 338 232 L334 239 L316 239Z" fill="#d9a686"/>
</g>
<g style="font:11.3px 'Liberation Sans',sans-serif;text-rendering:geometricPrecision" fill="#92d050">
<text x="30" y="45"><tspan style="font-weight:bold">Understanding</tspan> Our</text>
<text x="30" y="57">Strengths, Weaknesses, Opportunities,</text>
<text x="30" y="69.4">and Threats</text>
</g>
<g style="font:7.9px 'Liberation Sans',sans-serif;text-rendering:geometricPrecision" fill="#f2effb">
<circle cx="32.5" cy="88" r="1.1"/><text x="43" y="90.8">This analysis helps us identify the internal and</text>
<text x="43" y="102">external factors that shape the future of our</text>
<text x="43" y="113.2">university.</text>
<circle cx="32.5" cy="126.6" r="1.1"/><text x="43" y="129.3">Let’s explore the key points to drive informed</text>
<text x="43" y="140.4">decisions and strategic growth.</text>
</g>
</svg></svg>
<div id="sel"></div>
<svg class="sl" style="left:45px;top:307px" width="146" height="82" viewBox="-1.4635 0.0000 427.3416 240.7617" preserveAspectRatio="none" ><svg x="0" y="0" width="425" height="239" viewBox="0 0 425 239" overflow="hidden">
<rect width="425" height="239" fill="url(#gBg)"/>

<circle cx="206" cy="12" r="9.6" fill="url(#gTop)"/>
<circle cx="408.3" cy="76" r="16.7" fill="#92d050"/>
<circle cx="15" cy="147.6" r="14.6" fill="url(#gLeft)"/>
<circle cx="256" cy="210.5" r="8.3" fill="#92d050"/>

<rect x="23.8" y="27.8" width="125.4" height="53.2" rx="5.5" fill="#fff"/>
<text x="29.9" y="43.6" class="bt" style="letter-spacing:0.648px">STRENGTHS</text>
<text x="29.700000000000003" y="56.7" class="bs" textLength="53.4" lengthAdjust="spacingAndGlyphs">Add some text here</text>

<rect x="276.1" y="27.8" width="125.5" height="53.2" rx="5.5" fill="#fff"/>
<text x="282.20000000000005" y="43.6" class="bt" style="letter-spacing:0.569px">WEAKNESSES</text>
<text x="282.0" y="56.7" class="bs" textLength="53.4" lengthAdjust="spacingAndGlyphs">Add some text here</text>

<rect x="23.7" y="157.5" width="125.4" height="53.2" rx="5.5" fill="#fff"/>
<text x="29.799999999999997" y="172.9" class="bt" style="letter-spacing:0.565px">OPPORTUNITIES</text>
<text x="29.6" y="186.4" class="bs" textLength="53.4" lengthAdjust="spacingAndGlyphs">Add some text here</text>

<rect x="276.1" y="157.5" width="125.5" height="53.2" rx="5.5" fill="#fff"/>
<text x="282.20000000000005" y="172.9" class="bt" style="letter-spacing:0.844px">THREATS</text>
<text x="282.0" y="186.4" class="bs" textLength="53.4" lengthAdjust="spacingAndGlyphs">Add some text here</text>
<path d="M211.0 117.7 L211.0 41.400000000000006 A78 78 0 0 0 134.7 117.7 Z" fill="#fff"/>
<path d="M214.39999999999998 117.7 L214.39999999999998 41.400000000000006 A78 78 0 0 1 290.7 117.7 Z" fill="#92d050"/>
<path d="M211.0 121.10000000000001 L211.0 197.4 A78 78 0 0 1 134.7 121.10000000000001 Z" fill="#2f1a7e" stroke="#a79ad8" stroke-width="0.6"/>
<path d="M214.39999999999998 121.10000000000001 L214.39999999999998 197.4 A78 78 0 0 0 290.7 121.10000000000001 Z" fill="#7459d9" stroke="#b3a6ea" stroke-width="0.6"/>
<text class="big" transform="translate(183.6 100.1) scale(1.03 1.0)" fill="#92d050" stroke="#92d050">S</text>
<text class="big" transform="translate(240.9 100.0) scale(1.04 1.0)" fill="#fff" stroke="#fff">W</text>
<text class="big" transform="translate(184.1 158.9) scale(1.11 1.04)" fill="#fff" stroke="#fff">O</text>
<text class="big" transform="translate(241.0 158.3) scale(1.125 1.0)" fill="#fff" stroke="#fff">T</text>

</svg></svg>
<svg class="sl" style="left:240px;top:112px" width="425" height="239" viewBox="-0.3003 -0.0500 425.4004 239.2002" preserveAspectRatio="none" ><svg x="0" y="0" width="425" height="239" viewBox="0 0 425 239" overflow="hidden">
<rect width="425" height="239" fill="url(#gBg)"/>

<circle cx="206" cy="12" r="9.6" fill="url(#gTop)"/>
<circle cx="408.3" cy="76" r="16.7" fill="#92d050"/>
<circle cx="15" cy="147.6" r="14.6" fill="url(#gLeft)"/>
<circle cx="256" cy="210.5" r="8.3" fill="#92d050"/>

<rect x="23.8" y="27.8" width="125.4" height="53.2" rx="5.5" fill="#fff"/>
<text x="29.9" y="43.6" class="bt" style="letter-spacing:0.648px">STRENGTHS</text>
<text x="29.700000000000003" y="56.7" class="bs" textLength="53.4" lengthAdjust="spacingAndGlyphs">Add some text here</text>

<rect x="276.1" y="27.8" width="125.5" height="53.2" rx="5.5" fill="#fff"/>
<text x="282.20000000000005" y="43.6" class="bt" style="letter-spacing:0.569px">WEAKNESSES</text>
<text x="282.0" y="56.7" class="bs" textLength="53.4" lengthAdjust="spacingAndGlyphs">Add some text here</text>

<rect x="23.7" y="157.5" width="125.4" height="53.2" rx="5.5" fill="#fff"/>
<text x="29.799999999999997" y="172.9" class="bt" style="letter-spacing:0.565px">OPPORTUNITIES</text>
<text x="29.6" y="186.4" class="bs" textLength="53.4" lengthAdjust="spacingAndGlyphs">Add some text here</text>

<rect x="276.1" y="157.5" width="125.5" height="53.2" rx="5.5" fill="#fff"/>
<text x="282.20000000000005" y="172.9" class="bt" style="letter-spacing:0.844px">THREATS</text>
<text x="282.0" y="186.4" class="bs" textLength="53.4" lengthAdjust="spacingAndGlyphs">Add some text here</text>
<path d="M211.0 117.7 L211.0 41.400000000000006 A78 78 0 0 0 134.7 117.7 Z" fill="#fff"/>
<path d="M214.39999999999998 117.7 L214.39999999999998 41.400000000000006 A78 78 0 0 1 290.7 117.7 Z" fill="#92d050"/>
<path d="M211.0 121.10000000000001 L211.0 197.4 A78 78 0 0 1 134.7 121.10000000000001 Z" fill="#2f1a7e" stroke="#a79ad8" stroke-width="0.6"/>
<path d="M214.39999999999998 121.10000000000001 L214.39999999999998 197.4 A78 78 0 0 0 290.7 121.10000000000001 Z" fill="#7459d9" stroke="#b3a6ea" stroke-width="0.6"/>
<text class="big" transform="translate(183.6 100.1) scale(1.03 1.0)" fill="#92d050" stroke="#92d050">S</text>
<text class="big" transform="translate(240.9 100.0) scale(1.04 1.0)" fill="#fff" stroke="#fff">W</text>
<text class="big" transform="translate(184.1 158.9) scale(1.11 1.04)" fill="#fff" stroke="#fff">O</text>
<text class="big" transform="translate(241.0 158.3) scale(1.125 1.0)" fill="#fff" stroke="#fff">T</text>

</svg></svg>
<svg class="ab" style="left:0;top:0" width="736" height="420" viewBox="0 0 736 420" fill="none">
<path d="M339.6 225 Q320 228.6 310.6 241" stroke="#fff" stroke-width="2.6" stroke-linecap="round"/><path d="M303.2 249.9 L304.3 236.2 L316.4 243.8 Z" fill="#fff"/>
<rect x="297.0" y="219.6" width="50.0" height="32.20000000000002" stroke="#9a9a9a" stroke-width="0.9"/>
<path d="M322.0 219.6 V209" stroke="#9a9a9a" stroke-width="0.9"/>
<rect x="294.25" y="216.85" width="5.5" height="5.5" fill="#fff" stroke="#8c8c8c" stroke-width="0.8"/>
<rect x="319.25" y="216.85" width="5.5" height="5.5" fill="#fff" stroke="#8c8c8c" stroke-width="0.8"/>
<rect x="344.25" y="216.85" width="5.5" height="5.5" fill="#fff" stroke="#8c8c8c" stroke-width="0.8"/>
<rect x="294.25" y="232.95" width="5.5" height="5.5" fill="#fff" stroke="#8c8c8c" stroke-width="0.8"/>
<rect x="344.25" y="232.95" width="5.5" height="5.5" fill="#fff" stroke="#8c8c8c" stroke-width="0.8"/>
<rect x="294.25" y="249.05" width="5.5" height="5.5" fill="#fff" stroke="#8c8c8c" stroke-width="0.8"/>
<rect x="319.25" y="249.05" width="5.5" height="5.5" fill="#fff" stroke="#8c8c8c" stroke-width="0.8"/>
<rect x="344.25" y="249.05" width="5.5" height="5.5" fill="#fff" stroke="#8c8c8c" stroke-width="0.8"/>
<circle cx="321.7" cy="202.4" r="6.9" fill="#fff" stroke="#d6d6d6" stroke-width="0.6"/><path d="M318.7 202.2 a3.3 3.3 0 1 0 1.4 -2.7" stroke="#8c8c8c" stroke-width="0.95"/><path d="M321.3 198 L319.5 199.4 L321.1 201" stroke="#8c8c8c" stroke-width="0.9"/><circle cx="322.0" cy="202.2" r="0.9" fill="#8c8c8c"/>
<path d="M-2.8 2.8 A2.8 2.8 0 0 1 2.8 2.8 L2.8 8.8 C3.6 7.0 6.8 6.9 7.5 9.6 C8.4 7.8 11.2 7.9 11.9 10.6 C12.7 9.1 15.8 9.4 15.8 12.9 L15.8 19 Q15.6 24 13.4 30.5 L0.8 30.5 Q-2.6 24.5 -7 19.7 Q-10.9 15.9 -8.9 13.5 Q-6.4 12.2 -2.8 16.9 Z M7.5 9.6 V12.2 M11.9 10.6 V13.2" transform="translate(346.85 248.3)" fill="#fff" stroke="#20206e" stroke-width="1.5" stroke-linejoin="round" stroke-linecap="round"/>
<circle cx="364.8" cy="278.3" r="10.1" fill="#23236f"/>
<path d="M-2.8 2.8 A2.8 2.8 0 0 1 2.8 2.8 L2.8 8.8 C3.6 7.0 6.8 6.9 7.5 9.6 C8.4 7.8 11.2 7.9 11.9 10.6 C12.7 9.1 15.8 9.4 15.8 12.9 L15.8 19 Q15.6 24 13.4 30.5 L0.8 30.5 Q-2.6 24.5 -7 19.7 Q-10.9 15.9 -8.9 13.5 Q-6.4 12.2 -2.8 16.9 Z M7.5 9.6 V12.2 M11.9 10.6 V13.2" transform="translate(121.4 85.7) scale(1.08)" fill="#fff" stroke="#20206e" stroke-width="1.4" stroke-linejoin="round" stroke-linecap="round"/>
<circle cx="140" cy="116" r="10.2" fill="#23236f"/>
</svg>
<span class="t" style="left:354.8px;top:271.6px;width:20px;text-align:center;font-size:12.6px;font-weight:bold;color:#fff">1</span>
<span class="t" style="left:130px;top:109.4px;width:20px;text-align:center;font-size:12.6px;font-weight:bold;color:#fff">2</span>
<svg class="ab" style="left:690px;top:100px" width="46" height="300" viewBox="690 100 46 300" fill="none">
<rect x="699.4" y="103" width="9.2" height="8.8" rx="0.8" fill="#f8f8f8" stroke="#dcdcdc" stroke-width="0.8"/><path d="M702.2 108.4 L704 106.4 L705.8 108.4 Z" fill="#8a8a8a"/>
<rect x="699.4" y="350" width="9.2" height="8.8" rx="0.8" fill="#f8f8f8" stroke="#dcdcdc" stroke-width="0.8"/><path d="M702.2 353.4 L704 355.4 L705.8 353.4 Z" fill="#8a8a8a"/>
<rect x="699.4" y="180.6" width="9.2" height="31" rx="0.8" fill="#f6f6f6" stroke="#dcdcdc" stroke-width="0.8"/><path d="M702 192.6 H706 M702 194.2 H706 M702 195.8 H706 M702 197.4 H706 M702 199 H706 M702 200.6 H706" stroke="#d0d0d0" stroke-width="0.6"/>
<rect x="718.5" y="117.5" width="11.2" height="8" rx="1.6" stroke="#606060" stroke-width="0.9" stroke-linejoin="round" stroke-linecap="round"/><rect x="720.5" y="119.4" width="7.2" height="4.2" rx="0.8" stroke="#606060" stroke-width="0.9" stroke-linejoin="round" stroke-linecap="round"/>
<circle cx="722.8" cy="143.8" r="4" stroke="#606060" stroke-width="0.9" stroke-linejoin="round" stroke-linecap="round"/><rect x="722.2" y="143.4" width="6.8" height="6.8" rx="1" fill="#f1f1f1" stroke="#606060" stroke-width="0.9" stroke-linejoin="round" stroke-linecap="round"/>
<rect x="719.2" y="164" width="9.6" height="9.6" rx="1" stroke="#606060" stroke-width="0.9" stroke-linejoin="round" stroke-linecap="round"/><circle cx="726" cy="166.6" r="0.8" stroke="#606060" stroke-width="0.9" stroke-linejoin="round" stroke-linecap="round"/><path d="M719.6 172.6 L723.4 168.8 L728.4 173.2" stroke="#606060" stroke-width="0.9" stroke-linejoin="round" stroke-linecap="round"/>
<path d="M727.6 188.6 H722.4 a2.1 2.1 0 0 0 0 4.2 H723.6 M723.8 188.6 V196 M725.8 188.6 V196" stroke="#c2c2c2" stroke-width="0.9" stroke-linejoin="round" stroke-linecap="round"/>
<rect x="718.6" y="210.8" width="10.4" height="9.4" rx="1" stroke="#8c8c8c" stroke-width="0.9"/><path d="M718.6 213.8 H729 M718.6 217 H729 M722.1 210.8 V220.2 M725.5 210.8 V220.2" stroke="#8c8c8c" stroke-width="0.8"/>
<rect x="719.4" y="240.4" width="2" height="3.2" rx="0.6" stroke="#c2c2c2" stroke-width="0.9" stroke-linejoin="round" stroke-linecap="round"/><rect x="722.8" y="237.4" width="2" height="6.2" rx="0.6" stroke="#c2c2c2" stroke-width="0.9" stroke-linejoin="round" stroke-linecap="round"/><rect x="726.2" y="234.4" width="2" height="9.2" rx="0.6" stroke="#c2c2c2" stroke-width="0.9" stroke-linejoin="round" stroke-linecap="round"/>
<path d="M720.6 264 L723.9 257.8 L727.2 264 M721.8 262 H726 M719.8 266.8 Q723.9 264.6 728 266.8" stroke="#c2c2c2" stroke-width="0.9" stroke-linejoin="round" stroke-linecap="round"/>
</svg>
<div class="ab" style="left:207.5px;top:372.1px;width:501.5px;height:26px;background:#f2f2f2;border-top:1px solid #dcdcdc;box-sizing:border-box"></div>
<svg class="ab" style="left:690px;top:370px" width="30" height="30" viewBox="690 370 30 30" fill="none"><rect x="699.8" y="373.6" width="8.6" height="8.2" rx="0.6" fill="#fafafa" stroke="#dcdcdc" stroke-width="0.8"/><path d="M702.3 378.8 L704.1 376.8 L705.9 378.8 Z" fill="#8a8a8a"/><rect x="699.8" y="382.6" width="8.6" height="5.4" rx="0.6" fill="#fafafa" stroke="#dcdcdc" stroke-width="0.8"/><rect x="699.8" y="388.9" width="8.6" height="8.6" rx="0.6" fill="#fafafa" stroke="#dcdcdc" stroke-width="0.8"/><path d="M702.3 392.2 L704.1 394.2 L705.9 392.2 Z" fill="#8a8a8a"/></svg>
<span class="t" style="left:220.00px;top:381.50px;font-size:11.1px;transform:scaleX(0.9923);transform-origin:0 0;color:#1c1c1c;">Click to add notes</span>
<div class="ab" style="left:0;top:398px;width:736px;height:22px;background:#fff;border-top:1px solid #dedede;box-sizing:border-box"></div>
<div class="ab" style="left:598.4px;top:401.4px;width:16.4px;height:15.8px;border-radius:3px;background:#dcdcdc"></div>
<svg class="ab" style="left:0;top:398px" width="736" height="22" viewBox="0 398 736 22" fill="none">
<rect x="10" y="405.3" width="10.4" height="8" rx="1.3" stroke="#5a5a5a" stroke-width="0.9"/><path d="M13.6 407.1 L17.3 409.3 L13.6 411.5 Z" fill="#2f62cf"/>
<path d="M27.599999999999998 409.4 L29.4 411.4 L31.2 409.4" fill="none" stroke="#555" stroke-width="0.8" stroke-linecap="round" stroke-linejoin="round"/>
<path d="M546.4000000000001 409.4 L548.2 411.4 L550.0 409.4" fill="none" stroke="#555" stroke-width="0.8" stroke-linecap="round" stroke-linejoin="round"/>
<g stroke="#626262" stroke-width="0.65"><circle cx="561.9" cy="409.6" r="5.2"/><ellipse cx="561.9" cy="409.6" rx="2.3" ry="5.2"/><path d="M556.7 409.6 H567.1 M557.4 407 H566.4 M557.4 412.2 H566.4"/></g>
<path d="M584.6 411 V406.6 a1.2 1.2 0 0 0 -1.2 -1.2 H578 a1.2 1.2 0 0 0 -1.2 1.2 V412.6 a1.2 1.2 0 0 0 1.2 1.2 H582" stroke="#5a5a5a" stroke-width="0.8"/><path d="M583.2 413.2 L584.6 414.6 L587.4 411.6" stroke="#6f97e6" stroke-width="0.9"/>
<path d="M594.3 402 V417" stroke="#e2e2e2" stroke-width="1"/>
<rect x="601.4" y="405.6" width="10.6" height="7.8" rx="1.4" fill="#e8effb" stroke="#5a5a5a" stroke-width="0.95"/><path d="M603.2 408.6 V407.4 H604.6 M608.8 407.4 H610.2 V408.6 M610.2 410.4 V411.6 H608.8 M604.6 411.6 H603.2 V410.4" stroke="#6f97e6" stroke-width="0.8"/>
<path d="M624.6 411 V405.8 a1.2 1.2 0 0 1 1.2 -1.2 H631.6 a1.2 1.2 0 0 1 1.2 1.2 V411" stroke="#5a5a5a" stroke-width="0.9"/><path d="M624.4 413.4 H627.2 M625.4 412.4 L624.4 413.4 L625.4 414.4 M633 413.4 H630.2 M632 412.4 L633 413.4 L632 414.4" stroke="#6f97e6" stroke-width="0.8"/>
<path d="M646.6 409.4 H655" stroke="#6a6a6a" stroke-width="0.8"/><path d="M718.7 409.4 H727 M722.85 405.2 V413.6" stroke="#6a6a6a" stroke-width="0.8"/>
</svg>
<span class="t" style="left:578.60px;top:406.78px;font-size:6.4px;transform:scaleX(0.9384);transform-origin:0 0;color:#444;">A</span>
<span class="t" style="left:39.60px;top:405.68px;font-size:9px;transform:scaleX(0.8972);transform-origin:0 0;color:#444;">Slide 3 of 7</span>
<span class="t" style="left:234.60px;top:405.68px;font-size:9px;transform:scaleX(0.8885);transform-origin:0 0;color:#555;">All changes saved</span>
<span class="t" style="left:456.80px;top:405.68px;font-size:9px;transform:scaleX(0.8840);transform-origin:0 0;color:#444;">English – United States</span>
<span class="t" style="left:667.40px;top:405.78px;font-size:9px;transform:scaleX(0.9031);transform-origin:0 0;color:#444;">Zoom 48%</span>
</div>
</body></html>
